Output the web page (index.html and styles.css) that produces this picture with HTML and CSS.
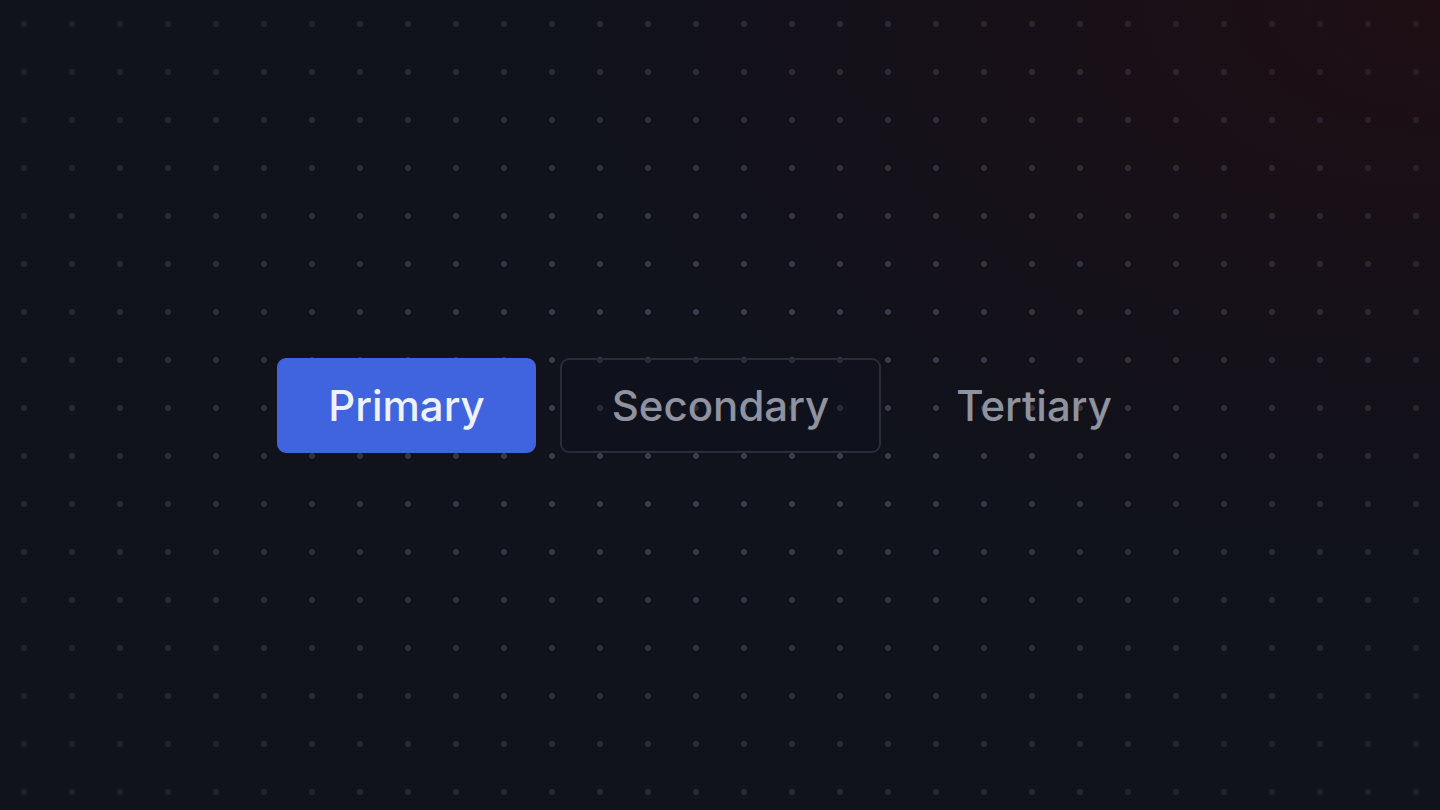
FILE: index.html
```html
<!DOCTYPE html>
<html lang="en">
<head>
<meta charset="utf-8">
<title>Buttons</title>
<link rel="stylesheet" href="styles.css">
</head>
<body>
<div class="stage">
  <div class="dots"></div>
  <div class="button-row">
    <button class="btn btn-primary">Primary</button>
    <button class="btn btn-secondary">Secondary</button>
    <button class="btn btn-tertiary">Tertiary</button>
  </div>
</div>
</body>
</html>
```

FILE: styles.css
```css
html, body {
  margin: 0;
  padding: 0;
  height: 100%;
}

body {
  background: #0f121c;
  font-family: Inter, "Noto Sans", sans-serif;
  overflow: hidden;
}

.stage {
  position: relative;
  width: 100%;
  height: 100vh;
  display: flex;
  align-items: center;
  justify-content: center;
  background:
    radial-gradient(ellipse 1100px 700px at 100% 0%, rgba(34, 14, 18, 0.8) 0%, rgba(34, 14, 18, 0.35) 45%, rgba(34, 14, 18, 0) 80%),
    #10121c;
}

.dots {
  position: absolute;
  inset: 0;
  background-image: radial-gradient(circle at 24px 24px, rgba(110, 114, 132, 0.5) 0, rgba(110, 114, 132, 0.5) 2.5px, rgba(110, 114, 132, 0) 3.4px);
  background-size: 48px 48px;
  -webkit-mask-image: radial-gradient(ellipse 75% 80% at 50% 50%, rgba(0,0,0,1) 0%, rgba(0,0,0,0.7) 40%, rgba(0,0,0,0.22) 100%);
  mask-image: radial-gradient(ellipse 75% 80% at 50% 50%, rgba(0,0,0,1) 0%, rgba(0,0,0,0.7) 40%, rgba(0,0,0,0.22) 100%);
  pointer-events: none;
}

.button-row {
  position: relative;
  display: flex;
  gap: 24px;
  align-items: center;
}

.btn {
  font-family: Inter, "Noto Sans", sans-serif;
  font-size: 42px;
  font-weight: 500;
  line-height: 55px;
  padding: 18px 49.5px;
  border: 2px solid transparent;
  border-radius: 9px;
  background: transparent;
  cursor: pointer;
}

.btn-primary {
  background: #3f64de;
  border-color: #3f64de;
  color: #eef2ff;
}

.btn-secondary {
  background: rgba(15, 18, 28, 0.35);
  border-color: #2a2d38;
  color: #8f929f;
}

.btn-tertiary {
  color: #8f929f;
}
```
